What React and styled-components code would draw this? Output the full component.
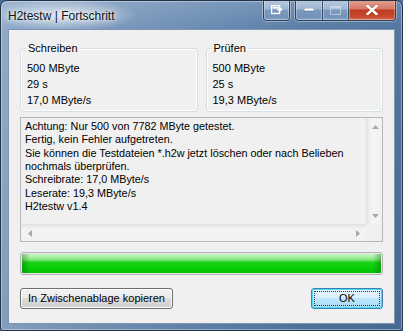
import React from "react";
import styled, { createGlobalStyle } from "styled-components";

const Global = createGlobalStyle`
  html, body { margin: 0; padding: 0; width: 403px; height: 331px; overflow: hidden; background: #4b6f9b; }
  body { font-family: "Liberation Sans", Arial, sans-serif; font-size: 11px; color: #000; }
  * { box-sizing: border-box; }
`;

const Window = styled.div`
  width: 403px;
  height: 331px;
  display: flex;
  flex-direction: column;
  border: 1px solid #233447;
  border-radius: 7px 7px 3px 3px;
  background:
    radial-gradient(ellipse 75px 16px at 62px 14px, rgba(226, 234, 242, 0.95), rgba(226, 234, 242, 0) 100%),
    linear-gradient(180deg, rgba(255,255,255,0.18) 0px, rgba(255,255,255,0.05) 28px, rgba(0,0,0,0.05) 100%),
    linear-gradient(90deg, #8aa6c6 0%, #7896bb 22%, #5f83ad 55%, #4f759f 80%, #4a6f9a 100%);
  box-shadow: inset 0 0 0 1px rgba(255, 255, 255, 0.35);
  overflow: hidden;
`;

const TitleBar = styled.div`
  height: 28px;
  display: flex;
  align-items: flex-start;
  flex: none;
`;

const Title = styled.div`
  margin: 8px 0 0 7px;
  font-size: 12px;
  line-height: 14px;
  color: #111;
  text-shadow: 0 0 6px rgba(255,255,255,0.9), 0 0 3px rgba(255,255,255,0.8);
`;

const Captions = styled.div`
  margin: -1px 6px 0 auto;
  display: flex;
  gap: 5px;
`;

const CapGroup = styled.div`
  display: flex;
  height: 21px;
  border: 1px solid #2f435c;
  border-top: none;
  border-radius: 0 0 4px 4px;
  overflow: hidden;
  box-shadow: 0 0 0 1px rgba(255,255,255,0.35);
`;

const CapButton = styled.div`
  width: ${(p) => p.$w}px;
  height: 100%;
  display: flex;
  align-items: center;
  justify-content: center;
  border-left: ${(p) => (p.$first ? "none" : "1px solid #3a4f6b")};
  background: ${(p) =>
    p.$close
      ? "linear-gradient(180deg, #e3a191 0%, #d47865 45%, #c03c22 50%, #c94a2e 85%, #dc7c60 100%)"
      : "linear-gradient(180deg, #b7c9de 0%, #9fb6d1 45%, #7d9bc0 50%, #7492b9 85%, #8aa8cc 100%)"};
  box-shadow: inset 0 0 0 1px rgba(255,255,255,0.3);
`;

const Client = styled.div`
  flex: 1;
  margin: 0 7px 6px;
  border: 1px solid #7f95b1;
  background: #f0f0f0;
  padding: 11px 11px 0;
  display: flex;
  flex-direction: column;
`;

const GroupRow = styled.div`
  display: flex;
  gap: 8px;
`;

const Group = styled.fieldset`
  margin: 0;
  width: 178px;
  height: 71px;
  border: 1px solid #d5dfe5;
  border-radius: 3px;
  padding: 5px 6px 3px;
  box-shadow: inset 0 0 0 1px #fbfcfc;
`;

const Legend = styled.legend`
  padding: 0 2px;
  margin-left: -1px;
  font-size: 11px;
  line-height: 14px;
`;

const Value = styled.div`
  line-height: 16px;
  font-size: 11px;
  white-space: nowrap;
`;

const TextBox = styled.div`
  margin-top: 5px;
  height: 125px;
  border: 1px solid #b7b7b7;
  background: #f0f0f0;
  display: grid;
  grid-template-columns: 1fr 16px;
  grid-template-rows: 1fr 17px;
`;

const TextContent = styled.div`
  padding: 2px 4px;
  overflow: hidden;
`;

const TextLine = styled.div`
  line-height: 13.35px;
  font-size: 10.8px;
  white-space: nowrap;
`;

const VScroll = styled.div`
  display: flex;
  flex-direction: column;
  justify-content: space-between;
  background: linear-gradient(90deg, #e6e6e6 0%, #f4f4f4 30%, #f1f1f1 100%);
  border-left: 1px solid #e2e2e2;
`;

const HScroll = styled.div`
  display: flex;
  justify-content: space-between;
  background: linear-gradient(180deg, #e6e6e6 0%, #f4f4f4 30%, #f1f1f1 100%);
  border-top: 1px solid #e2e2e2;
`;

const Corner = styled.div`
  background: #f0f0f0;
`;

const Arrow = styled.div`
  width: ${(p) => (p.$h ? 17 : 16)}px;
  height: ${(p) => (p.$h ? 16 : 17)}px;
  display: flex;
  align-items: center;
  justify-content: center;
`;

const Progress = styled.div`
  margin-top: 10px;
  height: 23px;
  border: 1px solid #b2b2b2;
  border-radius: 3px;
  padding: 1px;
  background: #e8e8e8;
`;

const ProgressFill = styled.div`
  height: 100%;
  border-radius: 1px;
  background:
    linear-gradient(90deg, rgba(0,80,0,0.35) 0px, rgba(0,80,0,0) 8px, rgba(0,80,0,0) calc(100% - 8px), rgba(0,80,0,0.35) 100%),
    linear-gradient(180deg, #c5f6c4 0%, #9aed98 22%, #5fe05c 36%, #1dd31b 42%, #08d106 70%, #06c806 88%, #0bbb0b 100%);
`;

const ButtonRow = styled.div`
  margin-top: 13px;
  display: flex;
  justify-content: space-between;
`;

const Button = styled.div`
  height: 21px;
  width: ${(p) => p.$w}px;
  border: 1px solid ${(p) => (p.$default ? "#3c7fb1" : "#707070")};
  border-radius: 3px;
  display: flex;
  align-items: center;
  justify-content: center;
  font-size: 11px;
  line-height: 1;
  background: ${(p) =>
    p.$default
      ? "linear-gradient(180deg, #eaf6fd 0%, #d9f0fc 45%, #bee6fd 50%, #a7d9f5 100%)"
      : "linear-gradient(180deg, #f2f2f2 0%, #ebebeb 45%, #dddddd 50%, #cfcfcf 100%)"};
  box-shadow: inset 0 0 0 1px ${(p) => (p.$default ? "#48dbfa" : "#fcfcfc")};
  position: relative;
`;

const Focus = styled.span`
  position: absolute;
  inset: 2px;
  border: 1px dotted #333;
`;

const Up = () => (
  <svg width="7" height="4" viewBox="0 0 7 4"><path d="M0 4 L3.5 0 L7 4 Z" fill="#a8a8a8" /></svg>
);
const Down = () => (
  <svg width="7" height="4" viewBox="0 0 7 4"><path d="M0 0 L3.5 4 L7 0 Z" fill="#a8a8a8" /></svg>
);
const Left = () => (
  <svg width="4" height="7" viewBox="0 0 4 7"><path d="M4 0 L0 3.5 L4 7 Z" fill="#a8a8a8" /></svg>
);
const Right = () => (
  <svg width="4" height="7" viewBox="0 0 4 7"><path d="M0 0 L4 3.5 L0 7 Z" fill="#a8a8a8" /></svg>
);

const lines = [
  "Achtung: Nur 500 von 7782 MByte getestet.",
  "Fertig, kein Fehler aufgetreten.",
  "Sie können die Testdateien *.h2w jetzt löschen oder nach Belieben",
  "nochmals überprüfen.",
  "Schreibrate: 17,0 MByte/s",
  "Leserate: 19,3 MByte/s",
  "H2testw v1.4",
];

export default function App() {
  return (
    <>
      <Global />
      <Window>
        <TitleBar>
          <Title>H2testw | Fortschritt</Title>
          <Captions>
            <CapGroup>
              <CapButton $w={25} $first>
                <svg width="12" height="10" viewBox="0 0 12 10">
                  <rect x="0.5" y="0.5" width="8" height="8" fill="none" stroke="#fff" strokeWidth="1.4" />
                  <rect x="1.5" y="2" width="6" height="1.5" fill="#fff" />
                  <path d="M6 4.5 H10 M8.5 2.8 L10.6 4.5 L8.5 6.2" stroke="#fff" strokeWidth="1.4" fill="none" />
                </svg>
              </CapButton>
            </CapGroup>
            <CapGroup>
              <CapButton $w={26} $first>
                <svg width="10" height="4" viewBox="0 0 10 4"><rect x="0" y="0" width="10" height="3" fill="#fff" stroke="#44576f" strokeWidth="0.5" /></svg>
              </CapButton>
              <CapButton $w={26}>
                <svg width="11" height="9" viewBox="0 0 11 9"><rect x="0.5" y="0.5" width="10" height="8" fill="none" stroke="rgba(255,255,255,0.45)" strokeWidth="1" /><rect x="1" y="1" width="9" height="1.5" fill="rgba(255,255,255,0.35)" /></svg>
              </CapButton>
              <CapButton $w={47} $close>
                <svg width="12" height="10" viewBox="0 0 12 10">
                  <path d="M1.5 1 L10.5 9 M10.5 1 L1.5 9" stroke="#5a1a10" strokeWidth="3.4" strokeLinecap="round" opacity="0.4" />
                  <path d="M1.5 1 L10.5 9 M10.5 1 L1.5 9" stroke="#fff" strokeWidth="2.4" strokeLinecap="square" />
                </svg>
              </CapButton>
            </CapGroup>
          </Captions>
        </TitleBar>
        <Client>
          <GroupRow>
            <Group>
              <Legend>Schreiben</Legend>
              <Value>500 MByte</Value>
              <Value>29 s</Value>
              <Value>17,0 MByte/s</Value>
            </Group>
            <Group>
              <Legend>Prüfen</Legend>
              <Value>500 MByte</Value>
              <Value>25 s</Value>
              <Value>19,3 MByte/s</Value>
            </Group>
          </GroupRow>
          <TextBox>
            <TextContent>
              {lines.map((l) => (
                <TextLine key={l}>{l}</TextLine>
              ))}
            </TextContent>
            <VScroll>
              <Arrow><Up /></Arrow>
              <Arrow><Down /></Arrow>
            </VScroll>
            <HScroll>
              <Arrow $h><Left /></Arrow>
              <Arrow $h><Right /></Arrow>
            </HScroll>
            <Corner />
          </TextBox>
          <Progress>
            <ProgressFill />
          </Progress>
          <ButtonRow>
            <Button $w={153}>In Zwischenablage kopieren</Button>
            <Button $w={72} $default>
              OK
              <Focus />
            </Button>
          </ButtonRow>
        </Client>
      </Window>
    </>
  );
}
